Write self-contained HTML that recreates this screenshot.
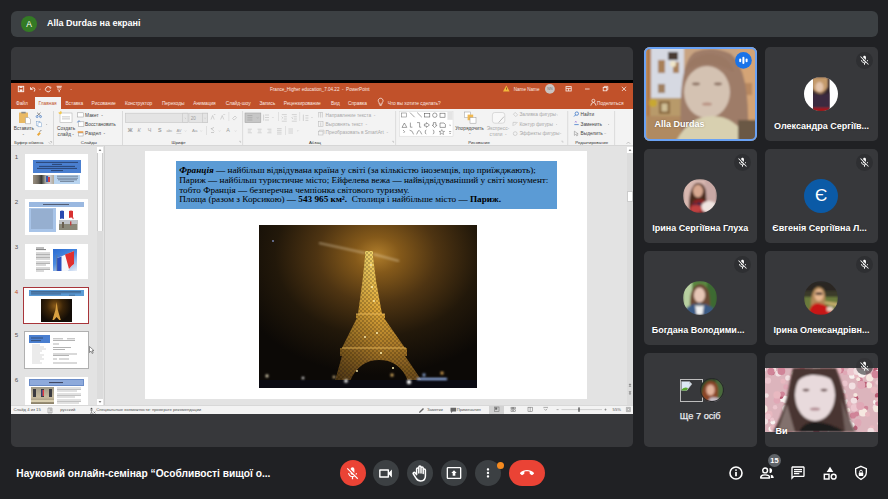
<!DOCTYPE html>
<html><head><meta charset="utf-8">
<style>
*{margin:0;padding:0;box-sizing:border-box}
html,body{width:888px;height:499px;overflow:hidden;background:#202124;font-family:"Liberation Sans",sans-serif;position:relative}
.a{position:absolute}
.bar{left:11px;top:11px;width:867px;height:25.5px;background:#3c4043;border-radius:6px}
.av{left:21px;top:16px;width:16px;height:16px;border-radius:50%;background:#347a25;color:#fff;font-size:8.5px;text-align:center;line-height:16px}
.bartxt{left:47px;top:17px;color:#fff;font-size:9px;font-weight:bold;white-space:nowrap;line-height:12px}
.pres{left:11px;top:47px;width:622px;height:400px;background:#37383b;border-radius:5px;overflow:hidden}
.tile{background:#37383b;border-radius:5px;overflow:hidden}
.ppt{left:11px;top:80px;width:622px;height:334px;background:#000}
.ttl{left:11px;top:83px;width:622px;height:26px;background:#c1512a}
.rib{left:11px;top:109px;width:622px;height:37px;background:#f3f3f3;border-bottom:1px solid #d6d6d6}
.main{left:11px;top:146px;width:622px;height:259.5px;background:#e3e3e3}
.stat{left:11px;top:405px;width:622px;height:9px;background:#f3f3f3;border-top:1px solid #d8d8d8}
.slide{left:145px;top:151px;width:442px;height:248px;background:#fff}
.bluebox{left:176px;top:161px;width:381px;height:48px;background:#5b9bd5}
.name{color:#fff;text-shadow:0 0 2px rgba(0,0,0,0.35);font-size:9px;font-weight:bold;white-space:nowrap;text-align:center;line-height:12px}
.btn{width:26px;height:26px;border-radius:50%;background:#3c4043}
.t{font-size:4.8px;line-height:6px;white-space:nowrap;color:#444}
.tw{font-size:4.8px;line-height:6px;white-space:nowrap;color:#fbe9e2}
.g{font-size:4.3px;line-height:6px;white-space:nowrap;color:#333}
.d{color:#a8a8a8}
.sep{width:1px;background:#dadada}
.st{font-size:4.2px;line-height:6px;white-space:nowrap;color:#555}
.serif{font-family:"Liberation Serif",serif;font-size:9.2px;line-height:9.85px;white-space:nowrap;color:#000}
</style></head>
<body>
<!-- ===== top bar ===== -->
<div class="a bar"></div>
<div class="a av">A</div>
<div class="a bartxt">Alla Durdas на екрані</div>

<!-- ===== presentation ===== -->
<div class="a pres"></div>
<div class="a ppt"></div>
<div class="a ttl"></div>
<div class="a rib"></div>
<div class="a main"></div>
<div class="a stat"></div>
<div class="a slide"></div>
<div class="a bluebox"></div>
<!-- title bar -->
<svg class="a" style="left:11px;top:83px" width="622" height="26" viewBox="0 0 622 26">
 <g fill="none" stroke="#fff" stroke-width="0.9" opacity="0.9">
  <!-- save -->
  <rect x="7.3" y="3.3" width="5.4" height="5.4"/>
  <rect x="8.6" y="3.3" width="2.8" height="1.6" fill="#fff" stroke="none"/>
  <rect x="8.6" y="6.4" width="2.8" height="2.3" fill="#fff" stroke="none"/>
  <!-- undo -->
  <path d="M19.5 4.2 L19.5 6.4 L21.7 6.4 M19.7 6.2 Q21.5 3.9 23.4 5.2 Q24.6 6.6 23.2 8.6"/>
  <path d="M27.6 5.8 l1.2 1 l1.2-1" stroke-width="0.6" opacity="0.6"/>
  <!-- redo -->
  <path d="M39 4.5 A2.6 2.6 0 1 0 39.5 7.2"/>
  <path d="M38.6 3.6 L40.2 4.6 L38.8 5.8" stroke-width="0.8"/>
  <!-- customize -->
  <path d="M45.6 3.3 h5.2 M46 4.8 h4.4 M46.8 6.2 l1.4 1.4 l1.4 -1.4 M48.2 7.6 v1.6"/>
  <path d="M59.6 6.4 l0.5 0.5 l0.5-0.5" stroke-width="0.6"/>
 </g>
 <!-- warning -->
 <path d="M495.3 2.6 L498.6 8.4 L492 8.4 Z" fill="#f2b83c"/>
 <rect x="495" y="4.6" width="0.6" height="2" fill="#3a2a10"/>
 <circle cx="538.9" cy="5.9" r="4.9" fill="#c9c4c2"/>
 <text x="538.9" y="7.4" font-size="3.6" text-anchor="middle" fill="#777" font-family="Liberation Sans">NN</text>
 <g fill="none" stroke="#fff" stroke-width="0.8" opacity="0.9">
  <rect x="555" y="3.6" width="5.2" height="4.4"/>
  <path d="M555 5.4 h5.2 M557.6 5.4 v2.6"/>
  <path d="M574 6 h4.6"/>
  <rect x="592.2" y="4.4" width="3.6" height="3.4"/>
  <path d="M593.2 4.4 v-1 h3.6 v3.4 h-0.9"/>
  <path d="M610.9 3.8 l4.2 4.2 M615.1 3.8 l-4.2 4.2"/>
  <!-- lightbulb -->
  <path d="M368.6 22.3 h2 M368.3 21.2 h2.6 Q370.9 19.6 371.9 18.5 A2.4 2.4 0 1 0 367.4 18.5 Q368.3 19.6 368.3 21.2"/>
  <!-- share person -->
  <circle cx="582.4" cy="17.8" r="1.5"/>
  <path d="M579.8 22.6 Q580.2 19.6 582.4 19.5 Q584.6 19.6 585 22.6"/>
 </g>
</svg>
<div class="a tw" style="left:270px;top:86.8px;font-size:4.6px">France_Higher education_7.04.22 &nbsp;- &nbsp;PowerPoint</div>
<div class="a tw" style="left:513.7px;top:86.8px;font-size:4.6px">Name Name</div>
<!-- tabs -->
<div class="a" style="left:35px;top:97px;width:26px;height:12px;background:#f3f3f3"></div>
<div class="a tw" style="left:16px;top:101px">Файл</div>
<div class="a tw" style="left:38.4px;top:101px;color:#c1512a">Главная</div>
<div class="a tw" style="left:65.4px;top:101px">Вставка</div>
<div class="a tw" style="left:91.6px;top:101px">Рисование</div>
<div class="a tw" style="left:124.9px;top:101px">Конструктор</div>
<div class="a tw" style="left:161.9px;top:101px">Переходы</div>
<div class="a tw" style="left:193.2px;top:101px">Анимация</div>
<div class="a tw" style="left:225.7px;top:101px">Слайд-шоу</div>
<div class="a tw" style="left:259.4px;top:101px">Запись</div>
<div class="a tw" style="left:283.7px;top:101px">Рецензирование</div>
<div class="a tw" style="left:331px;top:101px">Вид</div>
<div class="a tw" style="left:348px;top:101px">Справка</div>
<div class="a tw" style="left:387.7px;top:101px">Что вы хотите сделать?</div>
<div class="a tw" style="left:597px;top:101.2px">Поделиться</div>
<!-- ribbon -->
<svg class="a" style="left:0;top:109px" width="640" height="37" viewBox="0 109 640 37">
 <!-- separators -->
 <g fill="#d4d4d4">
  <rect x="53" y="111" width="0.8" height="34"/>
  <rect x="122" y="111" width="0.8" height="34"/>
  <rect x="242.3" y="111" width="0.8" height="34"/>
  <rect x="395.3" y="111" width="0.8" height="34"/>
  <rect x="567.4" y="111" width="0.8" height="34"/>
  <rect x="614.3" y="111" width="0.8" height="34"/>
  <rect x="228.6" y="112" width="0.6" height="9"/>
  <rect x="206" y="126" width="0.6" height="9"/>
  <rect x="278" y="112" width="0.6" height="9"/>
  <rect x="299.5" y="112" width="0.6" height="9"/>
  <rect x="285.4" y="126" width="0.6" height="9"/>
 </g>
 <!-- paste -->
 <rect x="19" y="112.6" width="9" height="10.4" rx="0.6" fill="#e9b963"/>
 <rect x="21.3" y="111.8" width="4.4" height="1.6" fill="#8a8a8a"/>
 <path d="M25.5 117.5 h3.2 l1.8 1.8 v4.4 h-5z" fill="#fff" stroke="#999" stroke-width="0.5"/>
 <!-- scissors -->
 <path d="M37 112.6 l3.6 3.4 M40.6 112.6 l-3.6 3.4" stroke="#555" stroke-width="0.6" fill="none"/>
 <circle cx="37.1" cy="116.6" r="1" fill="none" stroke="#2b6cc4" stroke-width="0.6"/>
 <circle cx="40.5" cy="116.6" r="1" fill="none" stroke="#2b6cc4" stroke-width="0.6"/>
 <!-- copy -->
 <rect x="36.3" y="121.4" width="3.6" height="4" fill="#fff" stroke="#7aa0cc" stroke-width="0.5"/>
 <rect x="38" y="122.8" width="3.6" height="4" fill="#fff" stroke="#7aa0cc" stroke-width="0.5"/>
 <path d="M46 124 l0.6 0.6 l0.6-0.6" stroke="#777" stroke-width="0.4" fill="none"/>
 <!-- brush -->
 <path d="M37 134.5 l2.4-2.4 l1.4 1.4 l-2.4 2.4z" fill="#e9a73a"/>
 <path d="M39.6 131.8 l1.8-1.8" stroke="#555" stroke-width="0.7"/>
 <path d="M50 141.5 h1.6 v1.6 M48.6 142.2 l2 2" stroke="#888" stroke-width="0.4" fill="none"/>
 <!-- new slide -->
 <rect x="60" y="113" width="12" height="9.5" fill="#fff" stroke="#a8a8a8" stroke-width="0.5"/>
 <rect x="62" y="116.5" width="8" height="0.8" fill="#bbb"/><rect x="62" y="118.5" width="8" height="0.8" fill="#bbb"/>
 <path d="M60.5 111 l1 1.5 M58.5 112.8 l1.5 0.6" stroke="#f0b840" stroke-width="0.8"/>
 <circle cx="60.4" cy="113" r="1.2" fill="#f5c94a"/>
 <!-- small slide icons -->
 <rect x="77.5" y="112.8" width="6" height="4.2" fill="#fff" stroke="#999" stroke-width="0.5"/>
 <rect x="78.5" y="121.8" width="5.4" height="4.6" fill="#fff" stroke="#999" stroke-width="0.5"/>
 <path d="M77.4 122.4 a1.6 1.6 0 0 1 2.8 -0.8" stroke="#2b6cc4" stroke-width="0.7" fill="none"/>
 <rect x="77.7" y="131.2" width="5.6" height="1.8" fill="#f0a450"/>
 <rect x="78.5" y="133" width="4.6" height="3" fill="#fff" stroke="#999" stroke-width="0.5"/>
 <!-- font boxes -->
 <rect x="125.3" y="113.2" width="62.7" height="9.4" fill="#e4e4e4" stroke="#c6c6c6" stroke-width="0.6"/>
 <rect x="182.7" y="113.2" width="5.3" height="9.4" fill="#e4e4e4" stroke="#c6c6c6" stroke-width="0.6"/>
 <rect x="188.9" y="113.2" width="18.8" height="9.4" fill="#e4e4e4" stroke="#c6c6c6" stroke-width="0.6"/>
 <rect x="202.4" y="113.2" width="5.3" height="9.4" fill="#e4e4e4" stroke="#c6c6c6" stroke-width="0.6"/>
 <g stroke="#b0b0b0" stroke-width="0.5" fill="none">
  <path d="M184.8 117.8 l0.6 0.6 l0.6-0.6 M204.5 117.8 l0.6 0.6 l0.6-0.6"/>
  <path d="M211 119.5 l1.6-4 l1.6 4 M213.8 115 l0.8-0.8 l0.8 0.8"/>
  <path d="M220.6 119.5 l1.6-4 l1.6 4 M223.4 114.2 l0.8 0.8 l0.8-0.8"/>
  <path d="M232.5 118.5 l2.5-2.5 l1.6 1.6 l-2.5 2.5z"/>
  <!-- row 2 icons -->
  <path d="M185 130.7 l0.6 0.6 l0.6-0.6 M200.6 130.7 l0.6 0.6 l0.6-0.6 M219 130.7 l0.6 0.6 l0.6-0.6 M235 130.7 l0.6 0.6 l0.6-0.6"/>
  <path d="M211 132.5 h3 M211 129 l3-1.6 M210.8 128 l3.4 3.4" stroke-width="0.6"/>
 </g>
 <g fill="#9c9c9c" font-family="Liberation Sans" font-size="5.4">
  <text x="190.8" y="119.6" font-size="4.6">20</text>
  <text x="127.8" y="132.3" font-weight="bold">Ж</text>
  <text x="137.6" y="132.3" font-style="italic">К</text>
  <text x="147.8" y="132.3">Ч</text>
  <text x="158" y="132.3" font-weight="bold">S</text>
  <text x="166.4" y="132.3" font-size="3.8">abc</text>
  <text x="176.4" y="132" font-size="4">AV</text>
  <text x="192" y="132.3" font-size="4.4">Aa</text>
  <text x="226.3" y="132.3" font-size="5.4">A</text>
 </g>
 <rect x="176.4" y="133.4" width="5" height="0.5" fill="#bbb"/>
 <!-- paragraph -->
 <rect x="245" y="113" width="15.8" height="9.6" fill="#c6c6c6" stroke="#a6a6a6" stroke-width="0.6"/>
 <g stroke="#909090" stroke-width="0.5" fill="none">
  <path d="M247.4 115.6 h5 M247.4 117.8 h5 M247.4 120 h5 M257 117.5 l0.7 0.7 l0.7 -0.7"/>
 </g>
 <g stroke="#b8b8b8" stroke-width="0.55" fill="none">
  <path d="M265 115 h4 M265 117.5 h4 M265 120 h4 M263.6 114.6 v6"/>
  <path d="M272.3 117.4 l0.6 0.6 l0.6-0.6 M311.4 117.4 l0.6 0.6 l0.6-0.6 M297.4 130.6 l0.6 0.6 l0.6-0.6"/>
  <path d="M281.8 114.6 h5 M283.8 116.8 h3 M283.8 119 h3 M281.8 121.2 h5 M281.6 116.6 l1.2 1.2 l-1.2 1.2"/>
  <path d="M291.8 114.6 h5 M293.8 116.8 h3 M293.8 119 h3 M291.8 121.2 h5 M293 116.6 l-1.2 1.2 l1.2 1.2"/>
  <path d="M305.4 115.6 h3 M305.4 118 h3 M305.4 120.4 h3 M303.4 114.6 v6.4"/>
  <path d="M247.8 129.2 h4 M247.8 131 h3 M247.8 132.8 h4"/>
  <path d="M257.6 129.2 h4 M258.1 131 h3 M257.6 132.8 h4"/>
  <path d="M267.4 129.2 h4 M268.4 131 h3 M267.4 132.8 h4"/>
  <path d="M277 128.6 h4.6 M277 130.4 h4.6 M277 132.2 h4.6 M277 134 h4.6"/>
  <path d="M288.4 129 h4.6 M288.4 131 h4.6 M288.4 133 h4.6"/>
  <path d="M318.6 112.5 v5 M320.5 112.5 v5 M322.4 112.5 v5 M318.2 112.5 h4.6"/>
  <rect x="318.4" y="121.6" width="4.6" height="5"/>
  <path d="M320.7 122.5 v3.4"/>
  <rect x="318.4" y="131.2" width="4.6" height="3.8"/>
  <path d="M319.4 131.2 v-1 h4.6 v3.8"/>
 </g>
 <!-- shapes gallery -->
 <rect x="399.5" y="111.6" width="53.5" height="24.6" fill="#fff" stroke="#d8d8d8" stroke-width="0.5"/>
 <rect x="447.4" y="111.8" width="5.4" height="8" fill="#e4e4e4"/>
 <g stroke="#555" stroke-width="0.55" fill="none">
  <rect x="401.6" y="113" width="5" height="4" stroke="#777"/>
  <path d="M410 112.6 l4.6 4.6 M417.2 112.6 l4.6 4.6"/>
  <rect x="424.4" y="113.4" width="5.4" height="3.6"/>
  <circle cx="434.8" cy="115.2" r="2.2"/>
  <rect x="440" y="113.2" width="5" height="4"/>
  <path d="M402 127.4 l2.4-4.4 l2.4 4.4z"/>
  <path d="M410.4 122.6 v4.6 h2"/>
  <path d="M417 122.6 h2.6 v4.6 h1.6"/>
  <path d="M424.4 124 h2 v-1.4 l3 2.4 l-3 2.4 v-1.4 h-2z"/>
  <path d="M433.4 122.6 h2.4 v2.6 h1.2 l-2.4 2.4 l-2.4-2.4 h1.2z"/>
  <path d="M440 123 h4 l1.4 1.4 v3 h-5.4z"/>
  <path d="M403 130 l1.6 1.6 l-1 1.4"/>
  <path d="M409.6 130.2 q3 0 4 4.2 M416.6 134.4 q1.6-4.6 2.6-4 q1 0.4 2.6 4"/>
  <path d="M426.4 130 q-1.2 0 -1.2 2 q0 2 1.2 2 M432.8 130 q1.2 0 1.2 2 q0 2 -1.2 2"/>
  <path d="M441.8 129.6 l0.8 1.8 l2 0 l-1.6 1.2 l0.6 1.9 l-1.8-1.1 l-1.8 1.1 l0.6-1.9 l-1.6-1.2 l2 0z" stroke-width="0.45"/>
  <path d="M449.4 125 l0.7 0.7 l0.7-0.7 M449.4 133.2 l0.7 0.7 l0.7-0.7 M449 131.6 h2.2"/>
 </g>
 <!-- arrange -->
 <rect x="464.3" y="112" width="6" height="5.6" fill="#fff" stroke="#999" stroke-width="0.5"/>
 <rect x="467.6" y="114.6" width="5.6" height="5.6" fill="#f0b850"/>
 <rect x="470" y="117.6" width="6" height="5.6" fill="#fff" stroke="#999" stroke-width="0.5"/>
 <!-- express styles -->
 <rect x="492.4" y="112.5" width="12.4" height="10.7" rx="2.4" fill="#f8f8f8" stroke="#c8c8c8" stroke-width="0.6"/>
 <path d="M498.6 122.6 l5.4-6" stroke="#b8b8b8" stroke-width="0.9"/>
 <g stroke="#b8b8b8" stroke-width="0.55" fill="none">
  <path d="M513.4 114.2 l1.8-1.8 l2.4 2.4 l-1.8 1.8 z"/>
  <path d="M513 126 v-3.6 h3.6 M514 125.6 l3.6-3.6"/>
  <circle cx="515.2" cy="133.6" r="1.9"/>
  <path d="M556.6 114.6 l0.6 0.6 l0.6-0.6 M556 124 l0.6 0.6 l0.6-0.6 M560 133.2 l0.6 0.6 l0.6-0.6 M561.3 141.2 h1.6 v1.6"/>
 </g>
 <!-- find / replace / select -->
 <circle cx="576.8" cy="113.6" r="1.7" fill="none" stroke="#2b6cc4" stroke-width="0.7"/>
 <path d="M575.6 114.9 l-1.6 1.6" stroke="#2b6cc4" stroke-width="0.8"/>
 <path d="M574.3 124.6 h4.4" stroke="#2b6cc4" stroke-width="0.7"/>
 <path d="M575 122.6 l0.8-1.6 l0.8 1.6" stroke="#8a5ad0" stroke-width="0.5" fill="none"/>
 <path d="M574.4 131.2 v4.2 l1.2-1 l1.2 1.6 l0.8-0.5 l-1-1.6 h1.6z" fill="none" stroke="#777" stroke-width="0.45"/>
 <path d="M608 124 l0.6 0.6 l0.6-0.6 M604.6 133.4 l0.6 0.6 l0.6-0.6 M626.6 143.8 l1.8-1.8 l1.8 1.8" stroke="#888" stroke-width="0.45" fill="none"/>
 <path d="M392 141.3 h1.6 v1.6 M239 141.3 h1.6 v1.6" stroke="#999" stroke-width="0.4" fill="none"/>
</svg>
<div class="a t" style="left:13.7px;top:125.5px">Вставить</div>
<div class="a t" style="left:22.6px;top:131.6px">-</div>
<div class="a g" style="left:14.2px;top:140px">Буфер обмена</div>
<div class="a t" style="left:57px;top:125.5px">Создать</div>
<div class="a t" style="left:57.6px;top:131.6px">слайд -</div>
<div class="a g" style="left:80.8px;top:140px">Слайды</div>
<div class="a t" style="left:85.1px;top:112.6px">Макет &nbsp;-</div>
<div class="a t" style="left:85.1px;top:122.0px">Восстановить</div>
<div class="a t" style="left:85.1px;top:130.6px">Раздел &nbsp;-</div>
<div class="a g" style="left:171.5px;top:140px">Шрифт</div>
<div class="a g" style="left:309px;top:140px">Абзац</div>
<div class="a t d" style="left:325.6px;top:112.8px">Направление текста &nbsp;-</div>
<div class="a t d" style="left:325.6px;top:122.1px">Выровнять текст &nbsp;-</div>
<div class="a t d" style="left:325.6px;top:130.3px">Преобразовать в SmartArt &nbsp;-</div>
<div class="a t" style="left:455.2px;top:125.5px">Упорядочить</div>
<div class="a t" style="left:469px;top:131.3px">-</div>
<div class="a g" style="left:468.2px;top:140px">Рисование</div>
<div class="a t d" style="left:486.8px;top:125.8px">Экспресс-</div>
<div class="a t d" style="left:489.6px;top:132.0px">стили &nbsp;-</div>
<div class="a t d" style="left:519.4px;top:112.3px">Заливка фигуры</div>
<div class="a t d" style="left:519.4px;top:122.1px">Контур фигуры</div>
<div class="a t d" style="left:519.4px;top:130.5px">Эффекты фигуры</div>
<div class="a t" style="left:580.5px;top:112.3px">Найти</div>
<div class="a t" style="left:580.5px;top:122.0px">Заменить</div>
<div class="a t" style="left:580.5px;top:130.7px">Выделить</div>
<div class="a g" style="left:575.3px;top:140px">Редактирование</div>
<!-- slide panel -->
<div class="a" style="left:103.5px;top:146px;width:0.8px;height:259px;background:#d0d0d0"></div>
<div class="a" style="left:97px;top:147px;width:6px;height:257.5px;background:#dcdcdc"></div>
<div class="a" style="left:97px;top:147px;width:6px;height:6px;background:#fff"></div>
<div class="a" style="left:97px;top:153px;width:6px;height:78px;background:#fafafa;border-left:0.5px solid #ccc;border-right:0.5px solid #ccc"></div>
<div class="a" style="left:97px;top:398.5px;width:6px;height:6px;background:#fff"></div>
<svg class="a" style="left:97px;top:147px" width="6" height="6"><path d="M1.6 3.8 L3 2.2 L4.4 3.8z" fill="#555"/></svg>
<svg class="a" style="left:97px;top:398.5px" width="6" height="6"><path d="M1.6 2.2 L3 3.8 L4.4 2.2z" fill="#555"/></svg>
<!-- right scrollbar -->
<div class="a" style="left:627px;top:147px;width:6px;height:257.5px;background:#dcdcdc"></div>
<div class="a" style="left:627px;top:147px;width:6px;height:6px;background:#fff"></div>
<div class="a" style="left:627px;top:191px;width:6px;height:11px;background:#fff;border:0.5px solid #ccc"></div>
<svg class="a" style="left:627px;top:147px" width="6" height="6"><path d="M1.6 3.8 L3 2.2 L4.4 3.8z" fill="#555"/></svg>
<svg class="a" style="left:627px;top:382px" width="6" height="14"><path d="M1.6 2.8 L3 1.4 L4.4 2.8z M1.6 4.6 L3 3.2 L4.4 4.6z M1.6 9.6 L3 11 L4.4 9.6z M1.6 11.4 L3 12.8 L4.4 11.4z" fill="#666"/></svg>

<!-- numbers -->
<div class="a g" style="left:14.8px;top:153px;font-size:6.2px;line-height:7px;color:#555">1</div>
<div class="a g" style="left:14.8px;top:198px;font-size:6.2px;line-height:7px;color:#555">2</div>
<div class="a g" style="left:14.8px;top:243px;font-size:6.2px;line-height:7px;color:#555">3</div>
<div class="a g" style="left:14.8px;top:287.5px;font-size:6.2px;line-height:7px;color:#c1512a">4</div>
<div class="a g" style="left:14.8px;top:331px;font-size:6.2px;line-height:7px;color:#555">5</div>
<div class="a g" style="left:14.8px;top:376px;font-size:6.2px;line-height:7px;color:#555">6</div>

<!-- thumbnail 1 -->
<div class="a" style="left:25px;top:154px;width:63px;height:36px;background:#fff"></div>
<div class="a" style="left:33px;top:160px;width:48px;height:13px;background:#4a7fd0"></div>
<svg class="a" style="left:33px;top:160px" width="48" height="13"><g stroke="#0c1428" stroke-width="0.55"><path d="M3 2.4 h42 M19 4.4 h10 M6 6.4 h36 M4 8.4 h40 M18 10.6 h12"/></g></svg>
<div class="a" style="left:33px;top:174.5px;width:21px;height:9.5px;background:linear-gradient(90deg,#9a9080,#706a60 25%,#3a3a34 40%,#a8a8a0 60%,#c8ccd4 80%,#b0a898)"></div>
<div class="a" style="left:45.5px;top:176px;width:2px;height:6px;background:#3a5ab0"></div>
<div class="a" style="left:48px;top:177px;width:2px;height:5px;background:#d04040"></div>
<div class="a" style="left:54.3px;top:175px;width:26px;height:9px;background:#b8d4f0"></div>
<svg class="a" style="left:54px;top:174px" width="27" height="9"><g stroke="#1a1f2e" stroke-width="0.45"><path d="M3 2.2 h21 M3 4.2 h21 M4 5.8 h19 M6 7.4 h14"/></g></svg>
<!-- thumbnail 2 -->
<div class="a" style="left:25px;top:199px;width:63px;height:36px;background:#fff"></div>
<div class="a" style="left:29px;top:202px;width:55px;height:5px;background:#9ab8e0"></div>
<svg class="a" style="left:29px;top:202px" width="55" height="5"><path d="M14 2.5 h26" stroke="#334" stroke-width="0.7"/></svg>
<div class="a" style="left:29px;top:208px;width:27px;height:24px;background:#a8c4e8"></div>
<svg class="a" style="left:29px;top:208px" width="27" height="24"><g stroke="#5a6a80" stroke-width="0.45"><path d="M2 2 h22 M2 4 h22 M2 6 h22 M2 8 h22 M2 10 h22 M2 12 h22 M2 14 h22 M2 16 h22 M2 18 h22 M2 20 h22"/></g></svg>
<svg class="a" style="left:58px;top:208px" width="26" height="25">
 <path d="M2 3 q2 -1.2 4 0 v8 q-2 -1 -4 0z" fill="#2a4ab0"/>
 <path d="M11 3 q2 -1.2 4 0 v7 q-2 -1 -4 0z" fill="#d83030"/>
 <rect x="14.5" y="9.5" width="1" height="1.6" fill="#d83030"/>
 <rect x="1" y="12" width="18.5" height="10" fill="#8a8878"/>
 <rect x="1" y="12" width="18.5" height="4" fill="#c0c4c8"/>
 <rect x="4" y="14" width="2" height="6" fill="#6a6050"/>
 <rect x="12" y="13.4" width="1.4" height="4" fill="#c04040"/>
</svg>
<!-- thumbnail 3 -->
<div class="a" style="left:25px;top:244px;width:63px;height:35px;background:#fff"></div>
<svg class="a" style="left:35px;top:246px" width="16" height="28"><g stroke="#555" stroke-width="0.45"><path d="M1 2 h8 M1 3.6 h10" stroke="#222" stroke-width="0.6"/><path d="M1 7 h14 M1 8.5 h14 M1 10 h14 M1 11.5 h14 M1 13 h14 M1 16 h14 M1 17.5 h14 M1 19 h10 M1 22 h14 M1 23.5 h14 M1 25 h8"/></g></svg>
<div class="a" style="left:53px;top:249px;width:24px;height:22px;background:linear-gradient(150deg,#2a6ad0,#4a8ae0 45%,#a8c4ec 75%,#e8eef8)"></div>
<svg class="a" style="left:53px;top:249px" width="24" height="22"><path d="M4 9 q8 -3 17 -7 v13 q-4 3 -6 7 h-11z" fill="#f4f6fa"/><path d="M12 5.5 q5 -2 9 -3.5 v13 q-3 2 -5 5z" fill="#e03030"/><path d="M4 9 q2.5 -0.8 4.5 -1.6 v14.6 h-4.5z" fill="#2a50c0"/><rect x="3.6" y="6" width="0.6" height="16" fill="#777"/></svg>
<!-- thumbnail 4 selected -->
<div class="a" style="left:23.2px;top:287px;width:66px;height:36.6px;border:1.3px solid #a8353a;background:#fff"></div>
<div class="a" style="left:29px;top:290px;width:55px;height:6.3px;background:#5b9bd5"></div>
<svg class="a" style="left:29px;top:290px" width="55" height="7"><g stroke="#223" stroke-width="0.4"><path d="M2 1.5 h50 M2 2.8 h50 M2 4 h30 M40 5.2 h6"/></g></svg>
<div class="a" style="left:41.2px;top:298.5px;width:31.2px;height:23.2px;background:radial-gradient(circle at 45% 30%,#8a5a18 0,#3a2408 35%,#120c06 70%)"></div>
<svg class="a" style="left:41.2px;top:298.5px" width="31.2" height="23.2"><path d="M15.6 3 l-1.2 8 l-3 10 h1.6 l2.6-3 l2.6 3 h1.6 l-3-10z" fill="#d8a040"/></svg>
<!-- thumbnail 5 hovered -->
<div class="a" style="left:23.5px;top:331.3px;width:65.5px;height:37.5px;border:1px solid #b0b0b0;background:#fff"></div>
<div class="a" style="left:29px;top:335px;width:20.8px;height:8px;background:#4a7fd0"></div>
<svg class="a" style="left:29px;top:335px" width="60" height="33"><g stroke="#222" stroke-width="0.5"><path d="M2 3 h12 M2 5.6 h10"/></g><g stroke="#999" stroke-width="0.4"><path d="M3 10 h8 M3 12 h12 M3 14 h14 M3 16 h10 M3 18 h8 M3 20 h12 M3 22 h10 M3 24 h12 M3 26 h8 M3 28 h10"/></g><g stroke="#555" stroke-width="0.45"><path d="M24 3.8 h10 M38 3.8 h8 M24 5.5 h22 M24 9 h6 M24 12.5 h18 M24 14.5 h12 M24 19 h24 M24 20.5 h16 M24 24 h4 M30 24 h10 M24 28 h24"/></g></svg>
<svg class="a" style="left:89px;top:346px" width="6" height="8"><path d="M0.5 0.5 v6 l1.5-1.4 l1.2 2.4 l1-0.5 l-1.2-2.3 h2z" fill="#fff" stroke="#333" stroke-width="0.5"/></svg>
<!-- thumbnail 6 -->
<div class="a" style="left:25px;top:376.8px;width:63px;height:28px;background:#fff"></div>
<div class="a" style="left:29px;top:378.6px;width:55px;height:7.2px;background:#8eaadb;border:0.5px solid #6a8cc8"></div>
<svg class="a" style="left:29px;top:378.6px" width="55" height="7"><path d="M20 3.6 h14" stroke="#223" stroke-width="0.8"/></svg>
<div class="a" style="left:31px;top:386.7px;width:23px;height:17.8px;background:linear-gradient(180deg,#a09a88,#c8bca0 60%,#8a8068)"></div>
<svg class="a" style="left:31px;top:386.7px" width="23" height="18"><g fill="#3a3a40"><rect x="2" y="2" width="3" height="8"/><rect x="10" y="2" width="3" height="8"/><rect x="18" y="2" width="3" height="8"/></g><path d="M11 3 h2 v6 h-2z" fill="#e04040"/><rect x="10.5" y="3" width="1" height="6" fill="#2850a0"/><rect x="0" y="13" width="23" height="2" fill="#d8ceb0"/></svg>
<svg class="a" style="left:56px;top:387px" width="28" height="18"><g stroke="#666" stroke-width="0.4"><path d="M1 1 h24 M1 2.5 h24 M1 4 h20 M1 7 h24 M1 8.5 h24 M1 10 h18 M1 13 h24 M1 14.5 h24 M1 16 h22"/></g></svg>

<!-- main slide text -->
<div class="a serif" style="left:179.2px;top:165.8px"><b><i>Франція</i></b> — найбільш відвідувана країна у світі (за кількістю іноземців, що приїжджають);</div>
<div class="a serif" style="left:179.2px;top:175.65px">Париж — найбільш туристичне місто; Ейфелева вежа — найвідвідуваніший у світі монумент:</div>
<div class="a serif" style="left:179.2px;top:185.5px">тобто Франція — безперечна чемпіонка світового туризму.</div>
<div class="a serif" style="left:179.2px;top:195.35px">Площа (разом з Корсикою) — <b>543 965 км².</b> &nbsp;Столиця і найбільше місто — <b>Париж.</b></div>
<svg class="a" style="left:259px;top:225px" width="218" height="163" viewBox="0 0 218 163">
 <defs>
  <radialGradient id="glow" cx="118" cy="30" r="120" gradientUnits="userSpaceOnUse" gradientTransform="translate(118 30) scale(1.25 1) translate(-118 -30)">
   <stop offset="0" stop-color="#b07e2c"/>
   <stop offset="0.15" stop-color="#84591a"/>
   <stop offset="0.4" stop-color="#4e3412"/>
   <stop offset="0.68" stop-color="#22180a"/>
   <stop offset="1" stop-color="#0c0906"/>
  </radialGradient>
  <linearGradient id="tw" x1="0" y1="25" x2="0" y2="156" gradientUnits="userSpaceOnUse">
   <stop offset="0" stop-color="#ffe070"/>
   <stop offset="0.45" stop-color="#e0a838"/>
   <stop offset="0.75" stop-color="#a87828"/>
   <stop offset="1" stop-color="#6a4a1a"/>
  </linearGradient>
  <linearGradient id="sh" x1="0" y1="0" x2="1" y2="0">
   <stop offset="0" stop-color="#000" stop-opacity="0.3"/>
   <stop offset="0.5" stop-color="#000" stop-opacity="0"/>
   <stop offset="1" stop-color="#000" stop-opacity="0.05"/>
  </linearGradient>
  <pattern id="lat" width="4" height="4" patternUnits="userSpaceOnUse">
   <path d="M0 0 L4 4 M4 0 L0 4" stroke="#1a1006" stroke-width="0.8"/>
  </pattern>
  <filter id="bl"><feGaussianBlur stdDeviation="1.2"/></filter>
  <filter id="bl2"><feGaussianBlur stdDeviation="0.5"/></filter>
 </defs>
 <rect width="218" height="163" fill="url(#glow)"/>
 <path d="M60 18 L106 28 M114 29 L140 36" stroke="#f0e0c0" stroke-width="2" opacity="0.4" filter="url(#bl)"/>
 <g filter="url(#bl2)">
  <path id="twr" d="M106 26 L114 26 L114 32 L117 56 L123 89 L126 89 L126 93 L125 93 L146 123 L148 123 L148 131 L146 131 L163 156 L149 156 Q141 135 120 135 Q100 135 91 156 L76 156 L83 131 L81 131 L81 123 L83 123 L98 93 L97 93 L97 89 L99 89 L103.5 56 L106 32z" fill="url(#tw)"/>
  <path d="M106 26 L114 26 L114 32 L117 56 L123 89 L126 89 L126 93 L125 93 L146 123 L148 123 L148 131 L146 131 L163 156 L149 156 Q141 135 120 135 Q100 135 91 156 L76 156 L83 131 L81 131 L81 123 L83 123 L98 93 L97 93 L97 89 L99 89 L103.5 56 L106 32z" fill="url(#lat)" opacity="0.28"/>
  <path d="M106 26 L114 26 L114 32 L117 56 L123 89 L126 89 L126 93 L125 93 L146 123 L148 123 L148 131 L146 131 L163 156 L149 156 Q141 135 120 135 Q100 135 91 156 L76 156 L83 131 L81 131 L81 123 L83 123 L98 93 L97 93 L97 89 L99 89 L103.5 56 L106 32z" fill="url(#sh)"/>
  <path d="M97 89 h29 M83 123 h64" stroke="#f0c060" stroke-width="1.2" opacity="0.8"/>
  <g fill="#fff0b0">
   <circle cx="112" cy="40" r="0.9"/><circle cx="113" cy="62" r="1"/><circle cx="115" cy="76" r="0.9"/><circle cx="118" cy="108" r="1"/><circle cx="106" cy="112" r="0.9"/><circle cx="134" cy="143" r="1"/><circle cx="98" cy="146" r="0.9"/><circle cx="122" cy="128" r="1"/>
  </g>
 </g>
 <rect x="0" y="155" width="218" height="8" fill="#0a0a12"/>
 <path d="M0 160 h145" stroke="#8aa8e0" stroke-width="3" opacity="0.85" filter="url(#bl2)"/>
 <g filter="url(#bl)">
  <circle cx="8" cy="151" r="1.4" fill="#fff4d0"/>
  <circle cx="44" cy="153" r="1.2" fill="#fff"/>
  <circle cx="87" cy="156" r="1.8" fill="#fff"/>
  <circle cx="75" cy="152" r="1.2" fill="#ffe0a0"/>
  <circle cx="150" cy="157" r="2.2" fill="#fff"/>
  <circle cx="133" cy="150" r="1.5" fill="#ffcc70"/>
  <circle cx="165" cy="150" r="1.4" fill="#a0c4ff"/>
  <circle cx="183" cy="148" r="1.5" fill="#ffc060"/>
  <path d="M158 154 h30" stroke="#a0c0ff" stroke-width="2"/>
 </g>
 <circle cx="14" cy="16" r="0.9" fill="#8090c0"/>
</svg>

<!-- status bar -->
<div class="a st" style="left:13.4px;top:407px">Слайд 4 из 15</div>
<svg class="a" style="left:47px;top:406.5px" width="7" height="7"><path d="M1 1 h4 v5 h-4z M3 1 v5 M3 3 h2" stroke="#777" stroke-width="0.5" fill="none"/></svg>
<div class="a st" style="left:60.3px;top:407px">русский</div>
<svg class="a" style="left:88.5px;top:406.5px" width="7" height="7"><circle cx="2.5" cy="1.6" r="0.9" fill="#555"/><path d="M1 3 h3 M2.5 3 v2 l-1 2 M2.5 5 l1 2 M4.5 4.5 l2 2 M6.5 4.5 l-2 2" stroke="#555" stroke-width="0.5" fill="none"/></svg>
<div class="a st" style="left:96.2px;top:407px">Специальные возможности: проверьте рекомендации</div>
<svg class="a" style="left:418px;top:406.5px" width="7" height="7"><path d="M1 6 l1.4-0.4 l3.6-3.6 l-1-1 l-3.6 3.6z" fill="#666"/></svg>
<div class="a st" style="left:426.9px;top:407px">Заметки</div>
<svg class="a" style="left:450px;top:406.5px" width="7" height="7"><path d="M0.5 0.8 h5.6 v3.8 h-3.6 l-1.4 1.6 v-1.6 h-0.6z" fill="#666"/></svg>
<div class="a st" style="left:456.7px;top:407px">Примечания</div>
<div class="a" style="left:489.2px;top:405.5px;width:15.3px;height:8.3px;background:#d2d2d2"></div>
<svg class="a" style="left:487px;top:405px" width="70" height="9" viewBox="487 405 70 9">
 <g stroke="#666" stroke-width="0.5" fill="none">
  <rect x="494.6" y="407" width="4.4" height="4.6"/><rect x="495.4" y="407.8" width="1.6" height="1.6" fill="#666"/>
  <rect x="511" y="407.2" width="1.8" height="1.6"/><rect x="513.6" y="407.2" width="1.8" height="1.6"/><rect x="511" y="409.8" width="1.8" height="1.6"/><rect x="513.6" y="409.8" width="1.8" height="1.6"/>
  <rect x="528" y="407.2" width="4.4" height="4.2"/><path d="M530.2 407.2 v4.2"/>
  <path d="M543.4 407.4 h4.6 M544.2 408.8 l1.5 1.6 l1.5 -1.6"/>
 </g>
</svg>
<svg class="a" style="left:555px;top:405px" width="78" height="9" viewBox="555 405 78 9">
 <path d="M556.6 409.6 h2" stroke="#666" stroke-width="0.5"/>
 <path d="M561.5 409.6 h40.5" stroke="#aaa" stroke-width="0.5"/>
 <rect x="578.3" y="407.4" width="1.4" height="4.4" fill="#555"/>
 <path d="M604.4 409.6 h2.2 M605.5 408.5 v2.2" stroke="#666" stroke-width="0.5"/>
 <text x="612.6" y="411.2" font-size="4.2" fill="#555" font-family="Liberation Sans">55%</text>
 <path d="M626.4 407.4 h4 v4.2 h-4z M627.4 408.4 h2 v2.2 h-2z" stroke="#666" stroke-width="0.45" fill="none"/>
</svg>

<!-- ===== tiles ===== -->
<svg width="0" height="0" style="position:absolute">
 <defs>
  <symbol id="micoff" viewBox="0 0 24 24"><path fill="#fff" d="M19 11h-1.7c0 .74-.16 1.43-.43 2.05l1.23 1.23c.56-.98.9-2.09.9-3.28zm-4.02.17c0-.06.02-.11.02-.17V5c0-1.66-1.34-3-3-3S9 3.34 9 5v.18l5.98 5.99zM4.27 3L3 4.27l6.01 6.01V11c0 1.66 1.33 3 2.99 3 .22 0 .44-.03.65-.08l1.66 1.66c-.71.33-1.5.52-2.31.52-2.76 0-5.3-2.1-5.3-5.1H5c0 3.41 2.72 6.23 6 6.72V21h2v-3.28c.91-.13 1.77-.45 2.54-.9L19.73 21 21 19.73 4.27 3z"/></symbol>
  <filter id="vb"><feGaussianBlur stdDeviation="1.3"/></filter>
  <filter id="vb2"><feGaussianBlur stdDeviation="0.8"/></filter>
 </defs>
</svg>
<div class="a tile" style="left:765px;top:47px;width:113px;height:93.5px"></div>
<div class="a tile" style="left:644px;top:149px;width:112.5px;height:93.5px"></div>
<div class="a tile" style="left:765px;top:149px;width:113px;height:93.5px"></div>
<div class="a tile" style="left:644px;top:251px;width:112.5px;height:93.5px"></div>
<div class="a tile" style="left:765px;top:251px;width:113px;height:93.5px"></div>
<div class="a tile" style="left:644px;top:353px;width:112.5px;height:93.5px"></div>
<div class="a tile" style="left:765px;top:353px;width:113px;height:93.5px"></div>

<!-- Alla video -->
<div class="a" style="left:644px;top:47px;width:112.5px;height:93.5px;border-radius:6px;overflow:hidden;background:#c8b090">
<svg width="113" height="94" viewBox="644 47 113 94" style="display:block">
 <g filter="url(#vb)">
  <rect x="644" y="47" width="113" height="94" fill="#c9a482"/>
  <rect x="650" y="47" width="34" height="52" fill="#d6d9e2"/>
  <rect x="646" y="47" width="5" height="94" fill="#b07a48"/>
  <rect x="658" y="60" width="7" height="13" fill="#a88058"/>
  <rect x="673" y="62" width="6" height="11" fill="#a88058"/>
  <rect x="658" y="84" width="7" height="9" fill="#a08060"/>
  <rect x="650" y="98" width="34" height="20" fill="#b89a6a"/>
  <circle cx="653" cy="103" r="4" fill="#c8a830"/>
  <rect x="659" y="101" width="11" height="13" fill="#8a6a40"/>
  <rect x="661.5" y="103.5" width="6" height="8" fill="#d0c098"/>
  <rect x="646" y="116" width="40" height="25" fill="#b08a60"/>
  <rect x="738" y="47" width="19" height="94" fill="#d4a476"/>
  <rect x="744" y="83" width="8" height="12" fill="#b88860"/>
  <path d="M681 134 Q678 62 695 52 Q712 45 731 54 Q750 70 748 134z" fill="#9e7c68"/>
  <ellipse cx="707" cy="92" rx="23" ry="26" fill="#d4c2b2"/>
  <path d="M684 72 Q690 56 708 54 Q728 54 734 72 Q720 64 708 64 Q694 64 684 72z" fill="#9a7864"/>
  <path d="M676 141 Q690 116 712 116 Q736 116 748 141z" fill="#d8d0b0"/>
  <ellipse cx="696" cy="84" rx="4" ry="1.4" fill="#8a7060"/>
  <ellipse cx="718" cy="84" rx="4" ry="1.4" fill="#8a7060"/>
  <ellipse cx="707" cy="104" rx="5" ry="1.6" fill="#b89080"/>
  <rect x="738" y="120" width="19" height="21" fill="#6a5844"/>
  <rect x="668" y="52" width="10" height="8" fill="#4a3a30"/>
  <circle cx="673" cy="64" r="3" fill="#f0e6c8"/>
 </g>
</svg>
</div>
<div class="a" style="left:644px;top:47px;width:112.5px;height:93.5px;border-radius:6px;border:2.3px solid #6aa2f4"></div>
<svg class="a" style="left:734.8px;top:52px" width="17" height="17" viewBox="0 0 17 17"><circle cx="8.4" cy="8.4" r="8.4" fill="#1a73e8"/><rect x="4.2" y="6.6" width="2" height="3.6" rx="1" fill="#fff"/><rect x="7.4" y="4.8" width="2" height="7.2" rx="1" fill="#fff"/><rect x="10.6" y="6.6" width="2" height="3.6" rx="1" fill="#fff"/></svg>
<div class="a name" style="left:654.4px;top:118px;text-align:left">Alla Durdas</div>

<!-- mute icons -->
<svg class="a" style="left:734.3px;top:153.5px" width="17" height="17"><circle cx="8.5" cy="8.5" r="8.5" fill="#2e2f32"/><use href="#micoff" x="2.8" y="2.8" width="11.4" height="11.4"/></svg>
<svg class="a" style="left:855.7px;top:51.7px" width="17" height="17"><circle cx="8.5" cy="8.5" r="8.5" fill="#2e2f32"/><use href="#micoff" x="2.8" y="2.8" width="11.4" height="11.4"/></svg>
<svg class="a" style="left:855.7px;top:153.5px" width="17" height="17"><circle cx="8.5" cy="8.5" r="8.5" fill="#2e2f32"/><use href="#micoff" x="2.8" y="2.8" width="11.4" height="11.4"/></svg>
<svg class="a" style="left:734.3px;top:255.5px" width="17" height="17"><circle cx="8.5" cy="8.5" r="8.5" fill="#2e2f32"/><use href="#micoff" x="2.8" y="2.8" width="11.4" height="11.4"/></svg>
<svg class="a" style="left:855.7px;top:255.5px" width="17" height="17"><circle cx="8.5" cy="8.5" r="8.5" fill="#2e2f32"/><use href="#micoff" x="2.8" y="2.8" width="11.4" height="11.4"/></svg>

<!-- Oleksandra avatar -->
<svg class="a" style="left:804px;top:76.6px" width="34" height="34" viewBox="0 0 34 34">
 <defs><clipPath id="c1"><circle cx="17" cy="17" r="17"/></clipPath><clipPath id="c1b"><rect x="9" y="0" width="16.5" height="34"/></clipPath></defs>
 <g clip-path="url(#c1)">
  <rect width="34" height="34" fill="#fff"/>
  <g clip-path="url(#c1b)">
   <rect x="9" y="0" width="17" height="34" fill="#2e2228"/>
   <g filter="url(#vb2)">
    <path d="M8 0 h16 v10 q-4 8 -10 6 q-6 -2 -6 -6z" fill="#c49a6a"/>
    <ellipse cx="15.5" cy="10" rx="4" ry="5" fill="#e4c4ac"/>
    <path d="M8 16 Q16 19 27 15 V34 H8z" fill="#3a2a40"/>
    <rect x="8" y="31" width="19" height="4" fill="#a81818"/>
   </g>
  </g>
 </g>
</svg>
<div class="a name" style="left:765px;top:120.2px;width:113px">Олександра Сергіїв...</div>

<!-- Iryna S avatar -->
<svg class="a" style="left:683.1px;top:178.8px" width="34" height="34" viewBox="0 0 34 34">
 <defs><clipPath id="c2"><circle cx="17" cy="17" r="17"/></clipPath></defs>
 <g clip-path="url(#c2)" filter="url(#vb2)">
  <rect width="34" height="34" fill="#d8b8b0"/>
  <rect x="22" y="0" width="12" height="34" fill="#c8a8a4"/>
  <path d="M6 34 Q5 8 14 4 Q22 3 23 14 L24 34z" fill="#4a2a1e"/>
  <ellipse cx="15" cy="12" rx="5" ry="6.5" fill="#d8a890"/>
  <path d="M6 34 Q8 20 16 20 Q26 20 28 34z" fill="#8a2424"/>
  <path d="M10 24 l3 3 l3-3 l3 3 l3-3" stroke="#2a2a4a" stroke-width="1.6" fill="none"/>
  <ellipse cx="26" cy="28" rx="8" ry="6" fill="#f0e4e0"/>
  <ellipse cx="13" cy="30" rx="6" ry="4" fill="#c04040"/>
 </g>
</svg>
<div class="a name" style="left:644px;top:222.2px;width:112.5px">Ірина Сергіївна Глуха</div>

<!-- Yevheniia avatar -->
<div class="a" style="left:804px;top:178.8px;width:34px;height:34px;border-radius:50%;background:#0b5aa6;color:#fff;font-size:17px;text-align:center;line-height:34px">Є</div>
<div class="a name" style="left:763px;top:222.2px;width:113px">Євгенія Сергіївна Л...</div>

<!-- Bohdana avatar -->
<svg class="a" style="left:683.1px;top:280.8px" width="34" height="34" viewBox="0 0 34 34">
 <defs><clipPath id="c3"><circle cx="17" cy="17" r="17"/></clipPath></defs>
 <g clip-path="url(#c3)" filter="url(#vb2)">
  <rect width="34" height="34" fill="#5a8a40"/>
  <rect x="0" y="0" width="9" height="34" fill="#b8d0a0"/>
  <rect x="24" y="0" width="10" height="34" fill="#3e6a30"/>
  <path d="M7 26 Q6 4 17 3 Q28 4 27 26z" fill="#6a4a34"/>
  <ellipse cx="16.5" cy="14" rx="5.6" ry="7.4" fill="#e6c6b6"/>
  <path d="M0 34 Q3 23 16 22 Q30 23 34 34z" fill="#3a5a84"/>
  <path d="M12 23.5 h9 l-1.5 10.5 h-6z" fill="#f0f0f0"/>
  <path d="M12 23.5 q4.5 2 9 0" stroke="#1a1a1a" stroke-width="1.2" fill="none"/>
 </g>
</svg>
<div class="a name" style="left:641.8px;top:324.2px;width:112.5px">Богдана Володими...</div>

<!-- Iryna O avatar -->
<svg class="a" style="left:804px;top:280.8px" width="34" height="34" viewBox="0 0 34 34">
 <defs><clipPath id="c4"><circle cx="17" cy="17" r="17"/></clipPath></defs>
 <g clip-path="url(#c4)" filter="url(#vb2)">
  <rect width="34" height="34" fill="#3a3a2a"/>
  <rect y="0" width="34" height="10" fill="#2a2820"/>
  <rect y="16" width="34" height="18" fill="#6a7a3a"/>
  <path d="M18 20 L34 22 L34 26 L18 22z" fill="#c8b070"/>
  <path d="M7 30 Q6 8 14 6 Q22 6 21 20 L20 30z" fill="#b08858"/>
  <ellipse cx="15" cy="14" rx="4.5" ry="6" fill="#e8b890"/>
  <rect x="11.5" y="11.5" width="7" height="2.4" rx="1.2" fill="#2a1a1a"/>
  <path d="M4 34 Q6 22 14 22 Q26 24 30 34z" fill="#c81818"/>
  <ellipse cx="26" cy="28" rx="3.5" ry="2.5" fill="#e8d0c0"/>
 </g>
</svg>
<div class="a name" style="left:765px;top:324.2px;width:113px">Ірина Олександрівн...</div>

<!-- more people -->
<div class="a" style="left:680px;top:379px;width:23px;height:23px;border:1px solid #bdbdbd"></div>
<svg class="a" style="left:681px;top:380.5px" width="12" height="11" viewBox="0 0 12 11"><path d="M0.5 0.5 h8 l2.5 2.5 l-2 2.4 l-3 4 h-5.5z" fill="#dde8f4" stroke="#aaa" stroke-width="0.4"/><path d="M0.6 8.6 q3-3.2 6.4-1.6 l-1.4 2.4 h-5z" fill="#5aa830"/><path d="M8.5 0.5 v2.5 h2.5" fill="none" stroke="#aaa" stroke-width="0.4"/></svg>
<svg class="a" style="left:699.5px;top:378.4px" width="24" height="24" viewBox="0 0 24 24">
 <defs><clipPath id="c5"><circle cx="12" cy="12" r="12"/></clipPath></defs>
 <g clip-path="url(#c5)" filter="url(#vb2)">
  <rect width="24" height="24" fill="#2e4a26"/>
  <rect x="16" width="8" height="24" fill="#4a6a3a"/>
  <path d="M2 24 Q1 5 10 3 Q18 3 18 12 Q18 20 16 24z" fill="#8a4426"/>
  <ellipse cx="10.5" cy="12" rx="4.2" ry="5.6" fill="#e4b49c"/>
  <path d="M10 20 Q14 18 20 21 L20 24 H8z" fill="#c8c0c8"/>
 </g>
 <circle cx="12" cy="12" r="11.5" fill="none" stroke="#28292c" stroke-width="1.2"/>
</svg>
<div class="a" style="left:679.7px;top:409.5px;color:#e8eaed;font-size:9.2px;white-space:nowrap;line-height:12px;-webkit-text-stroke:0.25px #e8eaed">Ще 7 осіб</div>

<!-- You video -->
<svg class="a" style="left:765px;top:367.6px" width="113" height="64.2" viewBox="0 0 113 64">
 <defs><filter id="fb"><feGaussianBlur stdDeviation="0.7"/></filter></defs>
 <rect width="113" height="64" fill="#dcb4bc"/>
 <g filter="url(#fb)"><circle cx="35.5" cy="7.6" r="3.4" fill="#f2e0e2"/><circle cx="94.7" cy="3.6" r="3.3" fill="#e0a8b6"/><circle cx="1.5" cy="27.4" r="2.2" fill="#f2e0e2"/><circle cx="62.6" cy="1.1" r="3.2" fill="#e0a8b6"/><circle cx="72.0" cy="37.8" r="2.1" fill="#f6e8e0"/><circle cx="2.9" cy="12.5" r="3.2" fill="#ecc6ce"/><circle cx="31.5" cy="7.1" r="2.3" fill="#d08498"/><circle cx="63.7" cy="44.7" r="2.2" fill="#e0a8b6"/><circle cx="41.3" cy="35.3" r="2.1" fill="#f8f2f0"/><circle cx="70.7" cy="31.7" r="3.2" fill="#b85a72"/><circle cx="52.4" cy="61.6" r="2.8" fill="#e0a8b6"/><circle cx="91.5" cy="45.9" r="2.5" fill="#d08498"/><circle cx="59.5" cy="58.3" r="3.6" fill="#d08498"/><circle cx="69.5" cy="2.1" r="3.1" fill="#ecc6ce"/><circle cx="87.1" cy="7.6" r="3.1" fill="#f8f2f0"/><circle cx="111.5" cy="2.4" r="3.2" fill="#b85a72"/><circle cx="37.5" cy="21.5" r="3.1" fill="#e8b8c0"/><circle cx="5.2" cy="3.6" r="2.6" fill="#f2e0e2"/><circle cx="4.2" cy="46.1" r="3.4" fill="#e8b8c0"/><circle cx="30.9" cy="24.0" r="3.5" fill="#f8f2f0"/><circle cx="108.9" cy="21.9" r="3.3" fill="#e8b8c0"/><circle cx="4.0" cy="50.8" r="2.3" fill="#e0a8b6"/><circle cx="44.3" cy="61.2" r="3.1" fill="#ecc6ce"/><circle cx="50.5" cy="35.5" r="3.9" fill="#f6e8e0"/><circle cx="99.8" cy="16.5" r="2.9" fill="#b85a72"/><circle cx="78.2" cy="23.6" r="2.5" fill="#f2e0e2"/><circle cx="18.0" cy="13.2" r="2.5" fill="#e8b8c0"/><circle cx="95.9" cy="9.8" r="2.6" fill="#ecc6ce"/><circle cx="46.9" cy="22.8" r="3.2" fill="#ecc6ce"/><circle cx="79.2" cy="33.1" r="3.4" fill="#f8f2f0"/><circle cx="51.3" cy="58.0" r="4.1" fill="#f6e8e0"/><circle cx="44.4" cy="24.6" r="3.1" fill="#f6e8e0"/><circle cx="4.4" cy="1.7" r="2.5" fill="#ecc6ce"/><circle cx="10.1" cy="39.1" r="2.2" fill="#ecc6ce"/><circle cx="60.9" cy="63.4" r="3.4" fill="#f2e0e2"/><circle cx="101.0" cy="40.0" r="2.3" fill="#d08498"/><circle cx="110.7" cy="39.2" r="3.0" fill="#f2e0e2"/><circle cx="98.0" cy="66.5" r="3.0" fill="#e8b8c0"/><circle cx="34.1" cy="7.1" r="3.6" fill="#d08498"/><circle cx="54.0" cy="45.4" r="3.1" fill="#e0a8b6"/><circle cx="110.2" cy="34.0" r="2.3" fill="#f8f2f0"/><circle cx="87.2" cy="17.9" r="3.4" fill="#f2e0e2"/><circle cx="79.8" cy="15.3" r="2.8" fill="#ecc6ce"/><circle cx="39.3" cy="12.6" r="3.2" fill="#b85a72"/><circle cx="72.7" cy="39.9" r="3.7" fill="#e0a8b6"/><circle cx="92.9" cy="54.3" r="3.6" fill="#e0a8b6"/><circle cx="20.8" cy="31.5" r="3.6" fill="#f8f2f0"/><circle cx="91.0" cy="30.1" r="2.4" fill="#b85a72"/><circle cx="50.2" cy="62.6" r="4.2" fill="#b85a72"/><circle cx="6.6" cy="4.2" r="3.0" fill="#b85a72"/><circle cx="21.3" cy="40.7" r="4.0" fill="#f8f2f0"/><circle cx="54.1" cy="42.7" r="3.8" fill="#f2e0e2"/><circle cx="96.3" cy="5.4" r="2.9" fill="#e0a8b6"/><circle cx="53.9" cy="9.5" r="3.7" fill="#b85a72"/><circle cx="7.3" cy="63.2" r="3.6" fill="#e8b8c0"/><circle cx="44.8" cy="63.3" r="3.6" fill="#ecc6ce"/><circle cx="115.2" cy="-1.1" r="3.3" fill="#e8b8c0"/><circle cx="93.0" cy="7.2" r="3.8" fill="#e8b8c0"/><circle cx="75.2" cy="21.5" r="3.2" fill="#ecc6ce"/><circle cx="-0.5" cy="53.0" r="3.6" fill="#f2e0e2"/><circle cx="59.7" cy="62.4" r="3.0" fill="#e0a8b6"/><circle cx="95.3" cy="11.8" r="2.6" fill="#d08498"/><circle cx="56.6" cy="50.5" r="2.7" fill="#f6e8e0"/><circle cx="96.3" cy="1.3" r="3.6" fill="#e8b8c0"/><circle cx="75.8" cy="54.1" r="3.1" fill="#ecc6ce"/><circle cx="60.3" cy="33.6" r="2.0" fill="#e8b8c0"/><circle cx="89.4" cy="39.6" r="3.7" fill="#ecc6ce"/><circle cx="17.5" cy="30.1" r="3.6" fill="#f8f2f0"/><circle cx="35.8" cy="33.3" r="3.2" fill="#f2e0e2"/><circle cx="102.1" cy="1.0" r="2.4" fill="#f8f2f0"/><circle cx="88.9" cy="32.5" r="3.2" fill="#f2e0e2"/><circle cx="49.7" cy="39.9" r="3.1" fill="#e0a8b6"/><circle cx="79.4" cy="28.7" r="3.2" fill="#e8b8c0"/><circle cx="57.4" cy="14.3" r="3.2" fill="#d08498"/><circle cx="106.8" cy="59.5" r="2.4" fill="#e8b8c0"/><circle cx="13.3" cy="5.5" r="3.0" fill="#f2e0e2"/><circle cx="76.9" cy="27.0" r="2.5" fill="#d08498"/><circle cx="90.3" cy="59.8" r="2.3" fill="#b85a72"/><circle cx="14.0" cy="58.8" r="4.1" fill="#e0a8b6"/><circle cx="85.9" cy="3.6" r="3.9" fill="#ecc6ce"/><circle cx="114.8" cy="55.3" r="2.4" fill="#f6e8e0"/><circle cx="115.3" cy="25.3" r="2.9" fill="#b85a72"/><circle cx="34.9" cy="47.6" r="2.0" fill="#e8b8c0"/><circle cx="49.4" cy="-1.7" r="2.7" fill="#d08498"/><circle cx="58.0" cy="1.5" r="4.2" fill="#e0a8b6"/><circle cx="112.6" cy="4.3" r="2.6" fill="#f8f2f0"/><circle cx="104.8" cy="9.7" r="3.7" fill="#f6e8e0"/><circle cx="98.1" cy="44.3" r="4.1" fill="#f6e8e0"/><circle cx="14.8" cy="61.3" r="3.3" fill="#b85a72"/><circle cx="7.6" cy="1.0" r="3.5" fill="#f6e8e0"/><circle cx="103.5" cy="15.8" r="2.0" fill="#f2e0e2"/><circle cx="92.4" cy="2.9" r="3.9" fill="#f2e0e2"/><circle cx="28.5" cy="5.5" r="2.0" fill="#f6e8e0"/><circle cx="107.3" cy="15.8" r="2.3" fill="#e0a8b6"/><circle cx="108.6" cy="64.8" r="2.6" fill="#ecc6ce"/><circle cx="21.0" cy="18.8" r="2.7" fill="#e0a8b6"/><circle cx="31.5" cy="32.0" r="2.4" fill="#b85a72"/><circle cx="92.6" cy="66.6" r="2.1" fill="#f8f2f0"/><circle cx="84.2" cy="35.6" r="2.4" fill="#e8b8c0"/><circle cx="26.2" cy="28.3" r="3.4" fill="#f6e8e0"/><circle cx="75.1" cy="35.2" r="4.0" fill="#d08498"/><circle cx="78.8" cy="65.8" r="2.8" fill="#ecc6ce"/><circle cx="45.2" cy="21.3" r="2.1" fill="#ecc6ce"/><circle cx="-1.3" cy="40.8" r="3.9" fill="#f6e8e0"/><circle cx="16.4" cy="2.9" r="3.9" fill="#d08498"/><circle cx="68.3" cy="45.5" r="2.1" fill="#ecc6ce"/><circle cx="15.7" cy="28.2" r="2.6" fill="#b85a72"/><circle cx="112.7" cy="35.3" r="2.5" fill="#d08498"/><circle cx="22.9" cy="9.8" r="2.7" fill="#f2e0e2"/><circle cx="53.5" cy="32.2" r="2.4" fill="#f8f2f0"/><circle cx="7.8" cy="54.2" r="2.3" fill="#f8f2f0"/><circle cx="43.9" cy="18.0" r="3.4" fill="#f2e0e2"/><circle cx="66.7" cy="34.0" r="3.7" fill="#f6e8e0"/><circle cx="88.0" cy="47.4" r="3.1" fill="#d08498"/><circle cx="83.2" cy="42.0" r="2.1" fill="#f6e8e0"/><circle cx="84.3" cy="53.9" r="2.3" fill="#f8f2f0"/><circle cx="95.3" cy="37.9" r="4.0" fill="#e0a8b6"/><circle cx="7.1" cy="-0.1" r="3.4" fill="#f2e0e2"/><circle cx="41.8" cy="28.6" r="2.1" fill="#f8f2f0"/><circle cx="71.5" cy="44.6" r="3.1" fill="#f8f2f0"/><circle cx="51.4" cy="1.9" r="4.1" fill="#f2e0e2"/><circle cx="75.5" cy="1.6" r="3.6" fill="#d08498"/><circle cx="93.3" cy="56.2" r="2.5" fill="#e0a8b6"/><circle cx="24.5" cy="42.5" r="3.0" fill="#f6e8e0"/><circle cx="6.1" cy="60.7" r="2.6" fill="#f8f2f0"/><circle cx="70.4" cy="42.0" r="2.2" fill="#ecc6ce"/><circle cx="36.5" cy="42.6" r="3.5" fill="#ecc6ce"/><circle cx="-1.5" cy="1.2" r="2.6" fill="#f2e0e2"/><circle cx="79.4" cy="44.3" r="2.6" fill="#d08498"/><circle cx="52.3" cy="29.6" r="2.3" fill="#e0a8b6"/><circle cx="34.1" cy="3.0" r="3.0" fill="#d08498"/><circle cx="51.6" cy="54.4" r="4.1" fill="#e8b8c0"/><circle cx="115.3" cy="24.1" r="4.0" fill="#e0a8b6"/><circle cx="5.9" cy="3.3" r="3.6" fill="#d08498"/><circle cx="110.4" cy="6.3" r="3.8" fill="#d08498"/><circle cx="102.5" cy="46.2" r="2.5" fill="#e8b8c0"/><circle cx="43.9" cy="8.1" r="4.1" fill="#e8b8c0"/><circle cx="45.2" cy="47.9" r="2.9" fill="#f6e8e0"/><circle cx="34.6" cy="55.8" r="2.0" fill="#b85a72"/><circle cx="96.9" cy="5.4" r="4.0" fill="#f8f2f0"/><circle cx="104.3" cy="17.3" r="2.8" fill="#f6e8e0"/><circle cx="43.4" cy="57.9" r="2.2" fill="#f6e8e0"/><circle cx="86.9" cy="56.8" r="2.6" fill="#f8f2f0"/><circle cx="96.3" cy="17.0" r="4.1" fill="#e0a8b6"/><circle cx="112.6" cy="27.5" r="2.7" fill="#b85a72"/><circle cx="90.4" cy="26.9" r="2.1" fill="#f6e8e0"/><circle cx="105.7" cy="62.8" r="3.2" fill="#f2e0e2"/><circle cx="2.9" cy="48.3" r="3.0" fill="#ecc6ce"/><circle cx="73.7" cy="17.0" r="2.1" fill="#ecc6ce"/><circle cx="17.3" cy="26.0" r="2.6" fill="#d08498"/><circle cx="84.9" cy="65.3" r="2.6" fill="#e0a8b6"/><circle cx="32.8" cy="36.0" r="2.9" fill="#ecc6ce"/><circle cx="73.5" cy="2.3" r="3.1" fill="#e8b8c0"/><circle cx="62.5" cy="28.7" r="2.7" fill="#e8b8c0"/><circle cx="47.9" cy="35.3" r="2.5" fill="#ecc6ce"/><circle cx="37.7" cy="3.4" r="2.5" fill="#d08498"/><circle cx="93.3" cy="11.1" r="2.0" fill="#f6e8e0"/><circle cx="42.6" cy="49.2" r="2.5" fill="#d08498"/><circle cx="37.2" cy="1.3" r="2.6" fill="#b85a72"/><circle cx="12.0" cy="32.2" r="3.4" fill="#e0a8b6"/><circle cx="8.0" cy="59.8" r="2.8" fill="#e8b8c0"/><circle cx="48.4" cy="18.8" r="3.8" fill="#f8f2f0"/><circle cx="12.1" cy="26.8" r="3.7" fill="#e8b8c0"/><circle cx="112.2" cy="31.3" r="2.2" fill="#e8b8c0"/><circle cx="112.7" cy="14.4" r="2.2" fill="#ecc6ce"/><circle cx="15.1" cy="65.0" r="2.2" fill="#e8b8c0"/><circle cx="7.1" cy="51.4" r="2.0" fill="#ecc6ce"/><circle cx="24.7" cy="61.4" r="3.4" fill="#d08498"/><circle cx="111.5" cy="40.9" r="3.2" fill="#f6e8e0"/><circle cx="80.1" cy="4.8" r="2.2" fill="#e0a8b6"/></g>
 <g filter="url(#vb2)">
  <path d="M28 0 H71 Q79 20 81 36 Q84 52 90 64 H8 Q16 50 22 30 Q25 12 28 0z" fill="#4a3630"/>
  <path d="M12 64 Q18 48 22 36 L30 64z" fill="#9a8a88" opacity="0.7"/>
  <path d="M76 30 Q82 50 92 64 H80z" fill="#8a7a78" opacity="0.6"/>
  <ellipse cx="50" cy="27" rx="20" ry="26" fill="#e8dadc"/>
  <path d="M30 6 Q40 0 56 1 Q68 4 71 14 Q60 6 46 7 Q36 8 30 16z" fill="#4a3630"/>
  <ellipse cx="41" cy="22" rx="3.4" ry="1.3" fill="#6a5050"/>
  <ellipse cx="59" cy="22" rx="3.4" ry="1.3" fill="#6a5050"/>
  <ellipse cx="50" cy="41" rx="5" ry="1.5" fill="#b08890"/>
  <path d="M34 64 Q38 54 50 54 Q64 54 80 64z" fill="#1c1a1c"/>
 </g>
</svg>
<svg class="a" style="left:855.7px;top:357.5px" width="17" height="17"><circle cx="8.5" cy="8.5" r="8.5" fill="#2e2f32" opacity="0.6"/><use href="#micoff" x="2.8" y="2.8" width="11.4" height="11.4"/></svg>
<div class="a name" style="left:775.6px;top:424.5px;text-align:left">Ви</div>

<!-- ===== bottom bar ===== -->
<div class="a" style="left:16.3px;top:467.6px;color:#fff;font-size:10.2px;font-weight:bold;white-space:nowrap;line-height:12px">Науковий онлайн-семінар “Особливості вищої о...</div>
<div class="a btn" style="left:339.5px;top:460px;background:#ea4335"></div>
<div class="a btn" style="left:373px;top:460px"></div>
<div class="a btn" style="left:407px;top:460px"></div>
<div class="a btn" style="left:441px;top:460px"></div>
<div class="a btn" style="left:475px;top:460px"></div>
<div class="a" style="left:509px;top:460px;width:36px;height:26px;border-radius:13px;background:#ea4335"></div>
<svg class="a" style="left:345px;top:465.5px" width="15" height="15"><use href="#micoff" x="0" y="0" width="15" height="15"/></svg>
<svg class="a" style="left:377px;top:465px" width="17" height="17" viewBox="0 0 24 24"><path fill="#fff" d="M15 8v8H5V8h10m1-2H4c-.55 0-1 .45-1 1v10c0 .55.45 1 1 1h12c.55 0 1-.45 1-1v-3.5l4 4v-11l-4 4V7c0-.55-.45-1-1-1z"/></svg>
<svg class="a" style="left:412px;top:464.6px" width="16" height="17" viewBox="0 0 16 17"><path fill="none" stroke="#fff" stroke-width="1.5" stroke-linejoin="round" stroke-linecap="round" d="M4.6 9.6 V4 a1.1 1.1 0 0 1 2.2 0 V8 V2.2 a1.1 1.1 0 0 1 2.2 0 V8 V3 a1.1 1.1 0 0 1 2.2 0 V8.4 V5 a1.1 1.1 0 0 1 2.2 0 V11 q0 4.8 -4.6 5 q-3.2 0 -4.8 -2.8 l-2.6 -4.2 a1 1 0 0 1 1.6 -1.2 z"/></svg>
<svg class="a" style="left:446px;top:465px" width="16" height="16" viewBox="0 0 24 24"><path fill="#fff" d="M21 3H3c-1.11 0-2 .89-2 2v14c0 1.11.89 2 2 2h18c1.11 0 2-.89 2-2V5c0-1.11-.89-2-2-2zm0 16.02H3V4.98h18v14.04zM10 12H8l4-4 4 4h-2v4h-4v-4z"/></svg>
<svg class="a" style="left:481px;top:466px" width="14" height="14" viewBox="0 0 24 24"><path fill="#fff" d="M12 8c1.1 0 2-.9 2-2s-.9-2-2-2-2 .9-2 2 .9 2 2 2zm0 2c-1.1 0-2 .9-2 2s.9 2 2 2 2-.9 2-2-.9-2-2-2zm0 6c-1.1 0-2 .9-2 2s.9 2 2 2 2-.9 2-2-.9-2-2-2z"/></svg>
<div class="a" style="left:496.5px;top:462px;width:7px;height:7px;border-radius:50%;background:#f58a1f"></div>
<svg class="a" style="left:519.7px;top:466px" width="14" height="14" viewBox="0 0 24 24"><path fill="#fff" d="M12 9c-1.6 0-3.15.25-4.6.72v3.1c0 .39-.23.74-.56.9-.98.49-1.87 1.12-2.66 1.85-.18.18-.43.28-.7.28-.28 0-.53-.11-.71-.29L.29 13.08c-.18-.17-.29-.42-.29-.7 0-.28.11-.53.29-.71C3.34 8.78 7.46 7 12 7s8.66 1.78 11.71 4.67c.18.18.29.43.29.71 0 .28-.11.53-.29.71l-2.48 2.48c-.18.18-.43.29-.71.29-.27 0-.52-.11-.7-.28-.79-.74-1.69-1.36-2.67-1.85-.33-.16-.56-.5-.56-.9v-3.1C15.15 9.25 13.6 9 12 9z"/></svg>
<!-- right icons -->
<svg class="a" style="left:728.2px;top:465px" width="16" height="16" viewBox="0 0 24 24"><circle cx="12" cy="12" r="9" fill="none" stroke="#fff" stroke-width="2.4"/><rect x="10.7" y="10.4" width="2.6" height="6.4" fill="#fff"/><circle cx="12" cy="7.6" r="1.4" fill="#fff"/></svg>
<svg class="a" style="left:759.2px;top:464.5px" width="16" height="16" viewBox="0 0 24 24"><circle cx="9.2" cy="8.2" r="3.6" fill="none" stroke="#fff" stroke-width="2.2"/><path d="M2.6 19.6 v-1 q0-3.8 6.6-3.8 q6.6 0 6.6 3.8 v1z" fill="none" stroke="#fff" stroke-width="2.2" stroke-linejoin="round"/><path d="M15.8 4.4 a3.8 3.8 0 0 1 0 7.6z" fill="#fff"/><path d="M17.6 14.6 q4.4 0.6 4.4 3.6 v1.4 h-4z" fill="#fff"/></svg>
<div class="a" style="left:767.9px;top:454.3px;width:13px;height:13px;border-radius:50%;background:#5f6368;color:#fff;font-size:7.4px;font-weight:bold;text-align:center;line-height:13px">15</div>
<svg class="a" style="left:790.4px;top:464.5px" width="16" height="16" viewBox="0 0 24 24"><path fill="#fff" d="M4 4h16v12H5.17L4 17.17V4m0-2c-1.1 0-1.99.9-1.99 2L2 22l4-4h14c1.1 0 2-.9 2-2V4c0-1.1-.9-2-2-2H4zm2 10h8v2H6v-2zm0-3h12v2H6V9zm0-3h12v2H6V6z"/></svg>
<svg class="a" style="left:821.9px;top:464.5px" width="16" height="16" viewBox="0 0 24 24"><path d="M12 2.5 l5 8 h-10z" fill="#fff"/><rect x="3.5" y="14" width="7" height="7" fill="none" stroke="#fff" stroke-width="2.2"/><circle cx="17.5" cy="17.5" r="3.6" fill="none" stroke="#fff" stroke-width="2.2"/></svg>
<svg class="a" style="left:853px;top:464.5px" width="16" height="16" viewBox="0 0 24 24"><path d="M12 2 L20 5.4 V11 q0 6.6 -8 10.6 q-8 -4 -8 -10.6 V5.4z" fill="none" stroke="#fff" stroke-width="2"/><rect x="8.6" y="11.4" width="6.8" height="5" rx="0.6" fill="#fff"/><path d="M10 11.4 v-1.6 a2 2 0 0 1 4 0 v1.6" fill="none" stroke="#fff" stroke-width="1.4"/></svg>
</body></html>
